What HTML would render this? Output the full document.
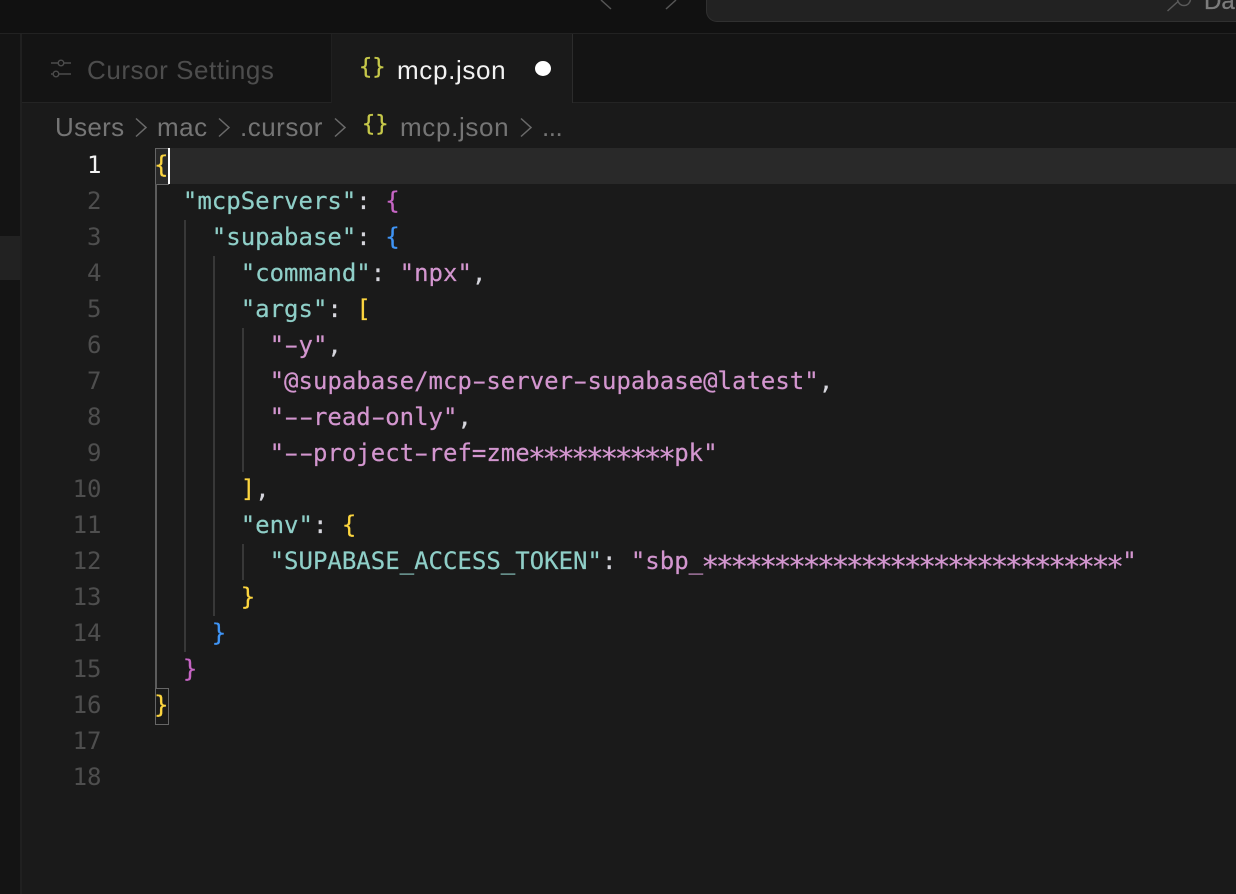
<!DOCTYPE html>
<html>
<head>
<meta charset="utf-8">
<style>
html,body{margin:0;padding:0;background:#1a1a1a;}
#r{position:relative;width:1236px;height:894px;overflow:hidden;background:#1a1a1a;}
.a{position:absolute;}
.s{position:absolute;font-family:"Liberation Sans",sans-serif;white-space:pre;line-height:36px;}
.l{position:absolute;left:154px;margin-top:-1px;height:36px;line-height:36px;font-family:"DejaVu Sans Mono",monospace;font-size:24px;white-space:pre;color:#d6d6dd;-webkit-text-stroke:.2px;}
.n{position:absolute;left:40px;width:61.500px;margin-top:-1px;text-align:right;height:36px;line-height:36px;font-family:"DejaVu Sans Mono",monospace;font-size:24px;color:#4e4e4e;}
.k{color:#8fcfc8}.v{color:#d396cf}.y{color:#fcd53f}.p{color:#c665c4}.b{color:#3f94f5}.c{color:#d6d6dd}
.br{position:absolute;font-family:"DejaVu Sans Mono",monospace;font-size:22px;line-height:24px;color:#c6c84a;white-space:pre;-webkit-text-stroke:.3px;}
.st{font-size:30px;letter-spacing:-3.610px;position:relative;top:8px;left:-1.800px;line-height:0;}
.h{display:inline-block;transform:scaleX(1.700);line-height:24px;}
</style>
</head>
<body>
<div id="r">
<div class="a" style="left:0;top:0;width:1236px;height:33px;background:#111111;"></div>
<div class="a" style="left:0;top:33px;width:1236px;height:1px;background:#222222;"></div>
<div class="a" style="left:0;top:34px;width:20px;height:860px;background:#141414;"></div>
<div class="a" style="left:20px;top:34px;width:2px;height:860px;background:#202020;"></div>
<div class="a" style="left:0;top:236px;width:20px;height:44px;background:#222222;"></div>

<svg class="a" style="left:590px;top:0;" width="100" height="14" viewBox="0 0 100 14"><path d="M11 0 L21 9 M86 0 L76 9" fill="none" stroke="#555" stroke-width="1.5"/></svg>
<div class="a" style="left:706px;top:-14px;width:540px;height:34px;background:#222222;border:1.5px solid #303030;border-radius:11px;"></div>
<svg class="a" style="left:1160px;top:0;" width="36" height="14" viewBox="0 0 36 14"><circle cx="24" cy="-1" r="6.500" fill="none" stroke="#5a5a5a" stroke-width="1.500"/><path d="M7.500 11 L18 1.500" stroke="#5a5a5a" stroke-width="1.500"/></svg>
<div class="s" style="left:1204px;top:-16px;font-size:24px;color:#7c7c7c;-webkit-text-stroke:.3px;">Da</div>

<div class="a" style="left:22px;top:34px;width:1214px;height:69px;background:#141414;"></div>
<div class="a" style="left:22px;top:102px;width:1214px;height:1px;background:#242424;"></div>
<div class="a" style="left:331px;top:34px;width:1px;height:69px;background:#202020;"></div>
<div class="a" style="left:332px;top:34px;width:240px;height:70px;background:#1a1a1a;"></div>
<div class="a" style="left:572px;top:34px;width:1px;height:69px;background:#2c2c2c;"></div>

<svg class="a" style="left:50px;top:58px;" width="22" height="22" viewBox="0 0 22 22" fill="none" stroke="#4c4c4c" stroke-width="1.4"><path d="M1 5H8M14 5H21M1 16H2.500M9 16H21"/><circle cx="11" cy="5" r="2.800"/><circle cx="6" cy="16" r="2.800"/></svg>
<div class="s" style="left:87px;top:52px;font-size:26px;letter-spacing:.55px;color:#4d4d4d;">Cursor Settings</div>

<div class="br" style="left:359px;top:56px;">{}</div>
<div class="s" style="left:397px;top:52px;font-size:26px;letter-spacing:.65px;color:#f2f2f2;">mcp.json</div>
<div class="a" style="left:535px;top:61px;width:16px;height:15px;border-radius:50%;background:#fff;"></div>

<div class="s" style="left:55px;top:109px;font-size:26px;letter-spacing:.3px;color:#757575;">Users</div>
<div class="s" style="left:157px;top:109px;font-size:26px;letter-spacing:.5px;color:#757575;">mac</div>
<div class="s" style="left:240px;top:109px;font-size:26px;letter-spacing:.5px;color:#757575;">.cursor</div>
<div class="br" style="left:362px;top:113px;">{}</div>
<div class="s" style="left:400px;top:109px;font-size:26px;letter-spacing:.65px;color:#757575;">mcp.json</div>
<div class="s" style="left:542px;top:109px;font-size:26px;letter-spacing:-.5px;color:#757575;">...</div>
<svg class="a" style="left:0;top:114px;" width="560" height="28" viewBox="0 0 560 28" fill="none" stroke="#6a6a6a" stroke-width="1.500"><path d="M136 4.500L146 13.500L136 22.500M219 4.500L229 13.500L219 22.500M335 4.500L345 13.500L335 22.500M521 4.500L531 13.500L521 22.500"/></svg>

<div class="a" style="left:155px;top:148px;width:1081px;height:36px;background:#292929;"></div>
<div class="a" style="left:155px;top:148px;width:12px;height:35px;border:1px solid #666;"></div>
<div class="a" style="left:155px;top:688px;width:12px;height:35px;border:1px solid #666;"></div>

<div class="a" style="left:155px;top:184px;width:1.500px;height:504px;background:#5c5c5c;"></div>
<div class="a" style="left:184px;top:220px;width:1.500px;height:432px;background:#383838;"></div>
<div class="a" style="left:213px;top:256px;width:1.500px;height:360px;background:#383838;"></div>
<div class="a" style="left:242px;top:328px;width:1.500px;height:144px;background:#383838;"></div>
<div class="a" style="left:242px;top:544px;width:1.500px;height:36px;background:#383838;"></div>

<div class="n" style="top:148px;color:#f2f2f2;">1</div>
<div class="n" style="top:184px;">2</div>
<div class="n" style="top:220px;">3</div>
<div class="n" style="top:256px;">4</div>
<div class="n" style="top:292px;">5</div>
<div class="n" style="top:328px;">6</div>
<div class="n" style="top:364px;">7</div>
<div class="n" style="top:400px;">8</div>
<div class="n" style="top:436px;">9</div>
<div class="n" style="top:472px;">10</div>
<div class="n" style="top:508px;">11</div>
<div class="n" style="top:544px;">12</div>
<div class="n" style="top:580px;">13</div>
<div class="n" style="top:616px;">14</div>
<div class="n" style="top:652px;">15</div>
<div class="n" style="top:688px;">16</div>
<div class="n" style="top:724px;">17</div>
<div class="n" style="top:760px;">18</div>

<div class="l" style="top:148px;"><span class="y">{</span></div>
<div class="l" style="top:184px;">  <span class="k">"mcpServers"</span><span class="c">: </span><span class="p">{</span></div>
<div class="l" style="top:220px;">    <span class="k">"supabase"</span><span class="c">: </span><span class="b">{</span></div>
<div class="l" style="top:256px;">      <span class="k">"command"</span><span class="c">: </span><span class="v">"npx"</span><span class="c">,</span></div>
<div class="l" style="top:292px;">      <span class="k">"args"</span><span class="c">: </span><span class="y">[</span></div>
<div class="l" style="top:328px;">        <span class="v">"<span class="h">-</span>y"</span><span class="c">,</span></div>
<div class="l" style="top:364px;">        <span class="v">"@supabase/mcp<span class="h">-</span>server<span class="h">-</span>supabase@latest"</span><span class="c">,</span></div>
<div class="l" style="top:400px;">        <span class="v">"<span class="h">-</span><span class="h">-</span>read<span class="h">-</span>only"</span><span class="c">,</span></div>
<div class="l" style="top:436px;">        <span class="v">"<span class="h">-</span><span class="h">-</span>project<span class="h">-</span>ref=zme<span class="st">**********</span>pk"</span></div>
<div class="l" style="top:472px;">      <span class="y">]</span><span class="c">,</span></div>
<div class="l" style="top:508px;">      <span class="k">"env"</span><span class="c">: </span><span class="y">{</span></div>
<div class="l" style="top:544px;">        <span class="k">"SUPABASE_ACCESS_TOKEN"</span><span class="c">: </span><span class="v">"sbp_<span class="st">*****************************</span>"</span></div>
<div class="l" style="top:580px;">      <span class="y">}</span></div>
<div class="l" style="top:616px;">    <span class="b">}</span></div>
<div class="l" style="top:652px;">  <span class="p">}</span></div>
<div class="l" style="top:688px;"><span class="y">}</span></div>

<div class="a" style="left:167.500px;top:148px;width:2.500px;height:36px;background:#fff;"></div>
</div>
</body>
</html>
